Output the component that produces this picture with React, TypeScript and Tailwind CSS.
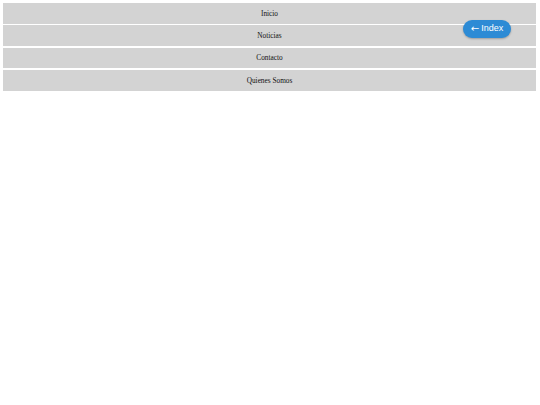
export default function App() {
  const items = ["Inicio", "Noticias", "Contacto", "Quienes Somos"];
  return (
    <div className="relative w-[540px] h-[405px] bg-white">
      <div className="flex flex-col gap-[1.7px] pt-[3px] pl-[3px] pr-[4px]">
        {items.map((t) => (
          <div
            key={t}
            className="h-[20.7px] pt-[1.5px] bg-[#d3d3d3] flex items-center justify-center text-[7.3px] text-[#111] font-['Liberation_Serif','DejaVu_Serif',serif]"
          >
            {t}
          </div>
        ))}
      </div>
      <div className="absolute left-[463px] top-[20px] w-[48px] h-[18px] rounded-full bg-[#2d8bd5] text-white text-[9px] flex items-center justify-center gap-[2px] shadow-[0_1px_2px_rgba(0,0,0,0.25)] font-['Liberation_Sans',Arial,sans-serif]">
        <span className="text-[10px] leading-none font-['DejaVu_Sans',sans-serif]">←</span>
        <span>Index</span>
      </div>
    </div>
  );
}
